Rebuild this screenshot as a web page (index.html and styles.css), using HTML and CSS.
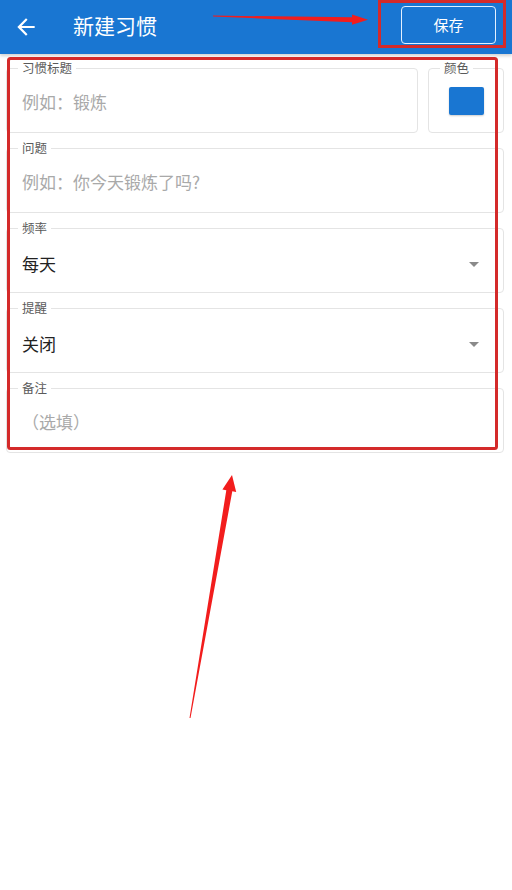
FILE: index.html
```html
<!DOCTYPE html>
<html lang="zh-CN">
<head>
<meta charset="utf-8">
<title>新建习惯</title>
<link rel="stylesheet" href="styles.css">
</head>
<body>
<div class="page">
  <header class="appbar">
    <svg class="back" viewBox="0 0 24 24" width="26" height="26"><path fill="#fff" d="M20 11H7.83l5.59-5.59L12 4l-8 8 8 8 1.41-1.41L7.83 13H20v-2z"/></svg>
    <div class="title">新建习惯</div>
    <button class="save">保存</button>
  </header>

  <form class="form">
    <div class="row">
      <fieldset class="field">
        <legend>习惯标题</legend>
        <div class="content placeholder">例如：锻炼</div>
      </fieldset>
      <fieldset class="field color-field">
        <legend>颜色</legend>
        <div class="content center"><span class="swatch"></span></div>
      </fieldset>
    </div>
    <fieldset class="field">
      <legend>问题</legend>
      <div class="content placeholder">例如：你今天锻炼了吗?</div>
    </fieldset>
    <fieldset class="field">
      <legend>频率</legend>
      <div class="content select"><span>每天</span><svg class="caret" viewBox="0 0 24 24" width="24" height="24"><path fill="#8a8a8a" d="M7 10l5 5 5-5z"/></svg></div>
    </fieldset>
    <fieldset class="field">
      <legend>提醒</legend>
      <div class="content select"><span>关闭</span><svg class="caret" viewBox="0 0 24 24" width="24" height="24"><path fill="#8a8a8a" d="M7 10l5 5 5-5z"/></svg></div>
    </fieldset>
    <fieldset class="field">
      <legend>备注</legend>
      <div class="content placeholder">（选填）</div>
    </fieldset>
  </form>

  <svg class="annot" viewBox="0 0 512 890" width="512" height="890">
    <rect x="379.5" y="1.5" width="125" height="45" fill="none" stroke="#d42a2a" stroke-width="3"/>
    <rect x="8.5" y="58.5" width="488" height="390" rx="2" fill="none" stroke="#d42a2a" stroke-width="3"/>
    <polygon fill="#f21d1d" points="213,15.6 352,17.3 352,14.6 368,19.8 352,24.8 352,22.2 213,16.6"/>
    <polygon fill="#f21d1d" points="190.5,718 232.3,491.3 236.2,492 232,475 222.4,489.6 226.3,490.3 189.5,718"/>
  </svg>
</div>
</body>
</html>
```

FILE: styles.css
```css
html, body {
  margin: 0;
  padding: 0;
  background: #fff;
}
body {
  font-family: "Noto Sans CJK SC", "Noto Sans", sans-serif;
  width: 512px;
  height: 890px;
  overflow: hidden;
}
.page {
  position: relative;
  width: 512px;
  height: 890px;
}
.appbar {
  height: 54px;
  background: #1976d2;
  display: flex;
  align-items: center;
  padding-left: 13px;
  box-shadow: 0 2px 3px rgba(0,0,0,0.18);
  box-sizing: border-box;
}
.back {
  display: block;
  margin-top: 0;
}
.title {
  color: #fff;
  font-size: 21px;
  line-height: 28px;
  margin-left: 34px;
  margin-top: -4px;
}
.save {
  margin-left: auto;
  margin-right: 16px;
  margin-top: -5px;
  width: 95px;
  height: 38px;
  border: 1.5px solid #e3f0ff;
  border-radius: 4px;
  background: transparent;
  color: #fff;
  font-family: inherit;
  font-size: 15px;
  padding: 0;
}
.form {
  display: flex;
  flex-direction: column;
  gap: 8px;
  padding: 7px 8px 0 6px;
}
.row {
  display: grid;
  grid-template-columns: 1fr 76px;
  gap: 10px;
}
.field {
  margin: 0;
  padding: 0 15px;
  border: 1px solid #e4e4e4;
  border-radius: 4px;
  min-width: 0;
  box-sizing: border-box;
}
.field legend {
  font-size: 12.5px;
  line-height: 14px;
  color: #5a5a5a;
  padding: 0 4px;
  margin-left: -4px;
}
.content {
  height: 57px;
  display: flex;
  align-items: center;
  font-size: 17px;
  color: #222;
}
.placeholder {
  color: #a9a9a9;
  margin-top: -2px;
  margin-bottom: 2px;
}
.center {
  justify-content: center;
  margin-top: -3px;
  margin-bottom: 3px;
}
.swatch {
  display: block;
  width: 35px;
  height: 28px;
  background: #1976d2;
  border-radius: 2px;
  box-shadow: 0 1px 2px rgba(0,0,0,0.2);
}
.select {
  justify-content: space-between;
}
.caret {
  display: block;
  margin-right: 2px;
}
.annot {
  position: absolute;
  left: 0;
  top: 0;
  pointer-events: none;
}
```
